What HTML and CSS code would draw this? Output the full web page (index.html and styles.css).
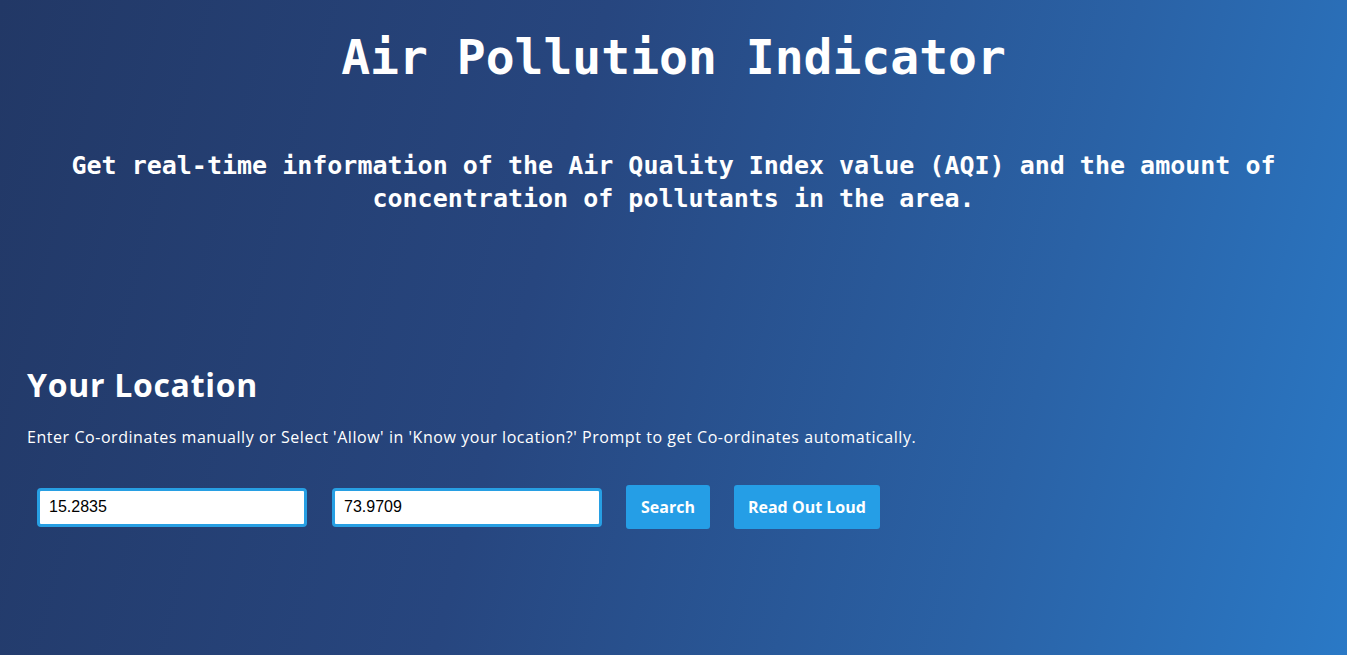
FILE: index.html
```html
<!DOCTYPE html>
<html lang="en">
<head>
<meta charset="utf-8">
<title>Air Pollution Indicator</title>
<link rel="stylesheet" href="styles.css">
</head>
<body>
<header class="hero">
  <h1 class="hero-title">Air Pollution Indicator</h1>
  <p class="hero-sub">Get real-time information of the Air Quality Index value (AQI) and the amount of concentration of pollutants in the area.</p>
</header>
<section class="location">
  <h2 class="location-title">Your Location</h2>
  <p class="location-text">Enter Co-ordinates manually or Select 'Allow' in 'Know your location?' Prompt to get Co-ordinates automatically.</p>
  <div class="controls">
    <input class="coord" type="text" value="15.2835">
    <input class="coord" type="text" value="73.9709">
    <button class="btn">Search</button>
    <button class="btn">Read Out Loud</button>
  </div>
</section>
</body>
</html>
```
FILE: styles.css
```css
html, body {
  margin: 0;
  height: 100%;
}
body {
  background: linear-gradient(105deg, #223866 0%, #27467f 40%, #2a62a6 75%, #2a79c6 100%);
  color: #ffffff;
  font-family: "Open Sans", "DejaVu Sans", sans-serif;
  overflow: hidden;
}
.hero {
  text-align: center;
  padding-top: 28px;
}
.hero-title {
  margin: 0;
  font-family: "DejaVu Sans Mono", monospace;
  font-weight: 700;
  font-size: 48px;
  line-height: 58px;
}
.hero-sub {
  margin: 63px auto 0;
  max-width: 1220px;
  font-family: "DejaVu Sans Mono", monospace;
  font-weight: 700;
  font-size: 25px;
  line-height: 33px;
}
.location {
  padding: 150px 27px 0;
}
.location-title {
  margin: 0;
  font-family: "Open Sans", sans-serif;
  font-weight: 700;
  font-size: 32px;
  line-height: 40px;
  letter-spacing: 0.7px;
}
.location-text {
  margin: 21px 0 0;
  font-size: 16px;
  line-height: 22px;
  letter-spacing: 0.55px;
}
.controls {
  margin-top: 37px;
  margin-left: 10px;
  display: flex;
  align-items: center;
  gap: 24px;
}
.coord {
  box-sizing: border-box;
  width: 270px;
  height: 39px;
  border: 3px solid #279fe3;
  border-radius: 4px;
  padding: 0 9px;
  font-family: "Liberation Sans", Arial, sans-serif;
  font-size: 16px;
  color: #000;
  background: #fff;
  outline: none;
}
.coord + .coord {
  margin-left: 1px;
}
.btn {
  height: 44px;
  padding: 0 15px;
  border: none;
  border-radius: 3px;
  background: #259ee6;
  color: #fff;
  font-family: "Open Sans", sans-serif;
  font-weight: 700;
  font-size: 16px;
  cursor: pointer;
}
.btn + .btn {
  padding: 0 14px;
}
```
